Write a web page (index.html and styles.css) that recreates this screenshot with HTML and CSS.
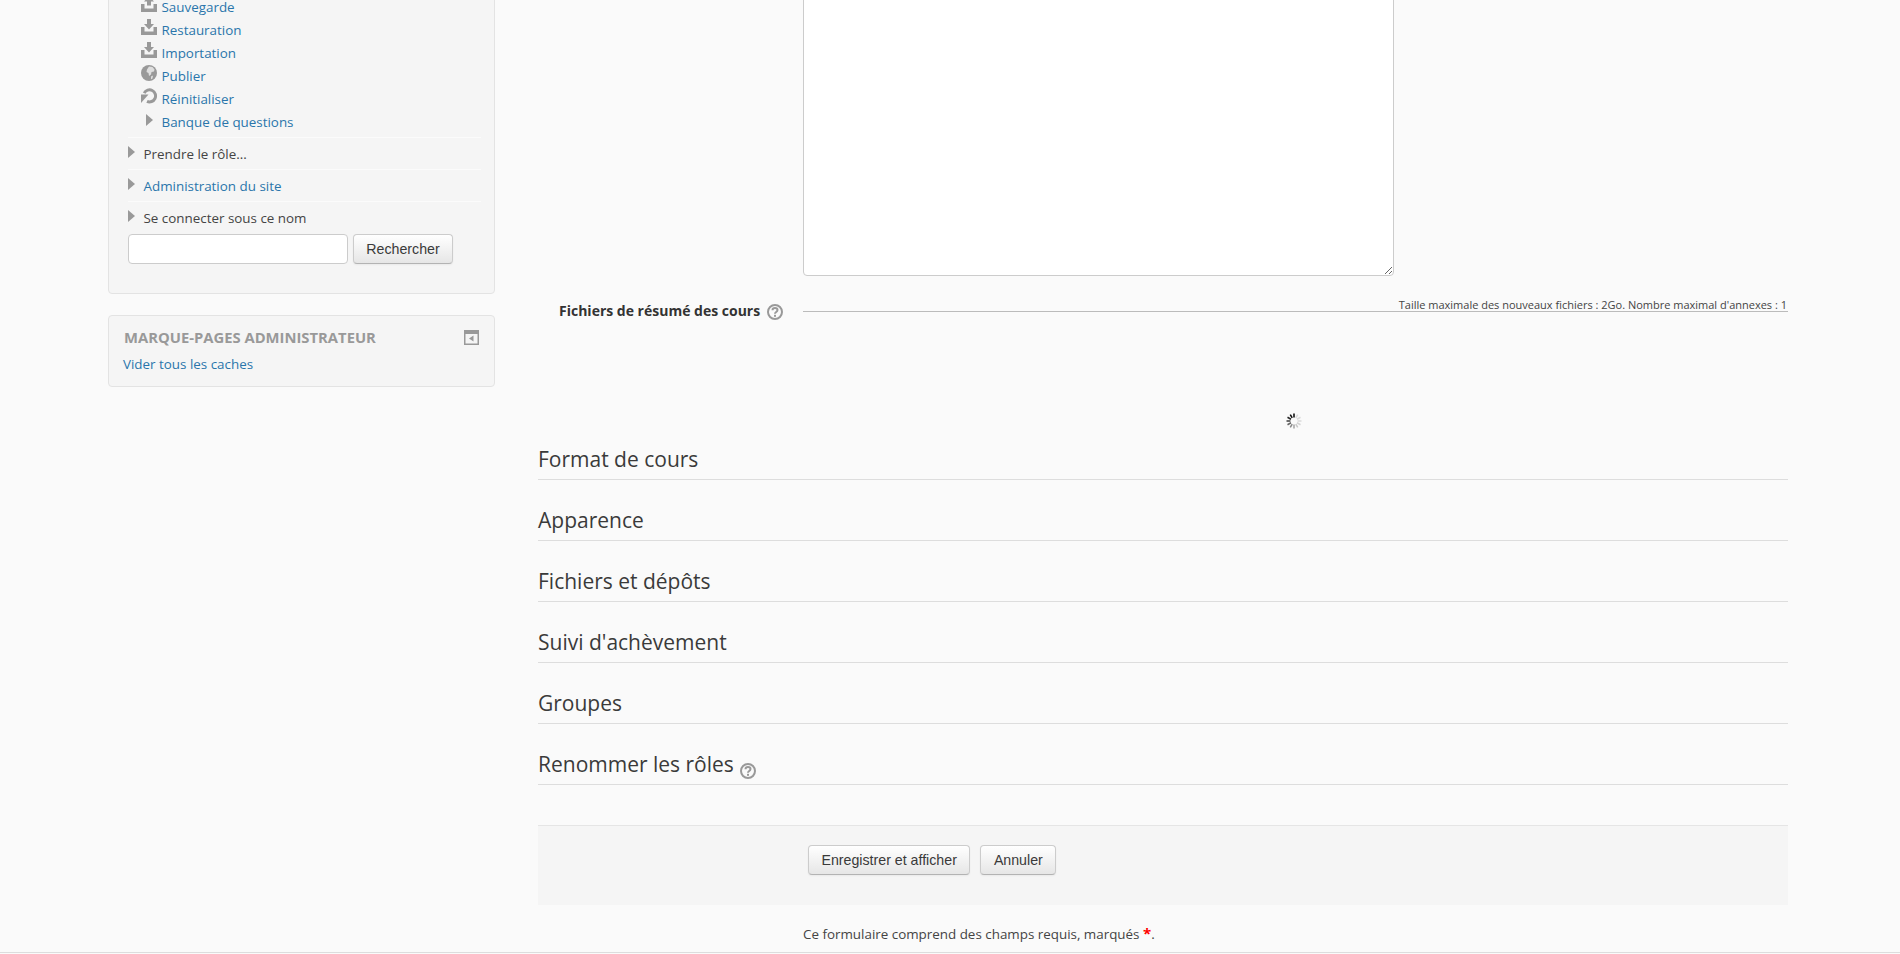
FILE: index.html
```html
<!DOCTYPE html>
<html lang="fr">
<head>
  <meta charset="UTF-8" />
  <meta name="viewport" content="width=device-width, initial-scale=1.0" />
  <title>Modifier les paramètres du cours</title>
  <link rel="stylesheet" href="styles.css">
</head>
<body>
  <svg class="icon-defs" width="0" height="0">
    <defs>
      <symbol id="i-help" viewBox="0 0 16 16">
        <circle cx="8" cy="8" r="7" fill="none" stroke="#999" stroke-width="2"/>
        <path d="M5.500 6.300c0-1.500 1-2.300 2.500-2.300s2.500.8 2.500 2.100c0 1.900-2.500 1.900-2.500 3.600" fill="none" stroke="#999" stroke-width="2"/>
        <rect x="7" y="10.800" width="2" height="2" fill="#999"/>
      </symbol>
      <symbol id="i-arrow" viewBox="0 0 7 12">
        <path d="M0 0l7 6-7 6z" fill="#999"/>
      </symbol>
    </defs>
  </svg>

  <div class="page">
    <aside class="sidebar">
      <div class="block block-settings">
        <ul class="sub-list">
          <li>
            <svg class="icon" viewBox="0 0 16 16"><path d="M8 0l5 5.500h-3v4H6v-4H3z" fill="#999"/><path d="M0 8h3.500v4.500h9V8H16v8H0z" fill="#999"/></svg>
            <a href="#">Sauvegarde</a>
          </li>
          <li>
            <svg class="icon" viewBox="0 0 16 16"><path d="M6 0h4v5h3l-5 5.500L3 5h3z" fill="#999"/><path d="M0 8h3.500v4.500h9V8H16v8H0z" fill="#999"/></svg>
            <a href="#">Restauration</a>
          </li>
          <li>
            <svg class="icon" viewBox="0 0 16 16"><path d="M6 0h4v5h3l-5 5.500L3 5h3z" fill="#999"/><path d="M0 8h3.500v4.500h9V8H16v8H0z" fill="#999"/></svg>
            <a href="#">Importation</a>
          </li>
          <li>
            <svg class="icon" viewBox="0 0 16 16"><circle cx="8" cy="8" r="8" fill="#999"/><path d="M8 1.500l3.500.5 2 2.500-.5 2-2.500.5-.5 2.500-2 1.500-.5-3L5.500 7 6 4.500z" fill="#f5f5f5" opacity=".75"/><path d="M10 11.500l2-1-.5 3-1.500.8z" fill="#f5f5f5" opacity=".75"/></svg>
            <a href="#">Publier</a>
          </li>
          <li>
            <svg class="icon" viewBox="0 0 16 16"><path d="M3.200 5.200A6 6 0 1 1 6 13.300" fill="none" stroke="#999" stroke-width="3"/><path d="M0 6.500h7.500L0 15z" fill="#999"/></svg>
            <a href="#">Réinitialiser</a>
          </li>
          <li class="sub-branch">
            <svg class="arrow"><use href="#i-arrow"/></svg>
            <a href="#">Banque de questions</a>
          </li>
        </ul>
        <div class="branch">
          <svg class="arrow"><use href="#i-arrow"/></svg>
          <span>Prendre le rôle...</span>
        </div>
        <div class="branch">
          <svg class="arrow"><use href="#i-arrow"/></svg>
          <a href="#">Administration du site</a>
        </div>
        <div class="branch">
          <svg class="arrow"><use href="#i-arrow"/></svg>
          <span>Se connecter sous ce nom</span>
        </div>
        <form class="search-form">
          <input type="text" class="search-input">
          <button type="button" class="btn btn-search">Rechercher</button>
        </form>
      </div>

      <div class="block block-bookmarks">
        <div class="block-head">
          <h2>Marque-pages administrateur</h2>
          <svg class="icon-dock" viewBox="0 0 15 15"><path d="M0 0h15v15H0zM1.500 4v9.500h12V4z" fill="#999" fill-rule="evenodd"/><path d="M9.500 5.500v6L5 8.500z" fill="#999"/></svg>
        </div>
        <a href="#">Vider tous les caches</a>
      </div>
    </aside>

    <main class="content">
      <div class="summary-row">
        <textarea class="summary-text"></textarea>
      </div>

      <div class="files-row">
        <div class="files-label">
          <strong>Fichiers de résumé des cours</strong>
          <svg class="help"><use href="#i-help"/></svg>
        </div>
        <div class="files-info">Taille maximale des nouveaux fichiers : 2Go. Nombre maximal d'annexes : 1</div>
        <svg class="spinner" viewBox="-8 -8 16 16">
          <g stroke-width="1.500" stroke="#000">
            <line x1="0" y1="-3.500" x2="0" y2="-7.500" opacity="1"/>
            <line x1="0" y1="-3.500" x2="0" y2="-7.500" opacity=".12" transform="rotate(30)"/>
            <line x1="0" y1="-3.500" x2="0" y2="-7.500" opacity=".12" transform="rotate(60)"/>
            <line x1="0" y1="-3.500" x2="0" y2="-7.500" opacity=".12" transform="rotate(90)"/>
            <line x1="0" y1="-3.500" x2="0" y2="-7.500" opacity=".15" transform="rotate(120)"/>
            <line x1="0" y1="-3.500" x2="0" y2="-7.500" opacity=".2" transform="rotate(150)"/>
            <line x1="0" y1="-3.500" x2="0" y2="-7.500" opacity=".35" transform="rotate(180)"/>
            <line x1="0" y1="-3.500" x2="0" y2="-7.500" opacity=".45" transform="rotate(210)"/>
            <line x1="0" y1="-3.500" x2="0" y2="-7.500" opacity=".6" transform="rotate(240)"/>
            <line x1="0" y1="-3.500" x2="0" y2="-7.500" opacity=".75" transform="rotate(270)"/>
            <line x1="0" y1="-3.500" x2="0" y2="-7.500" opacity=".85" transform="rotate(300)"/>
            <line x1="0" y1="-3.500" x2="0" y2="-7.500" opacity=".95" transform="rotate(330)"/>
          </g>
        </svg>
      </div>

      <h3 class="section-head">Format de cours</h3>
      <h3 class="section-head">Apparence</h3>
      <h3 class="section-head">Fichiers et dépôts</h3>
      <h3 class="section-head">Suivi d'achèvement</h3>
      <h3 class="section-head">Groupes</h3>
      <h3 class="section-head">Renommer les rôles <svg class="help help-head"><use href="#i-help"/></svg></h3>

      <div class="form-actions">
        <button type="button" class="btn">Enregistrer et afficher</button>
        <button type="button" class="btn">Annuler</button>
      </div>

      <p class="required-note">Ce formulaire comprend des champs requis, marqués <span class="req">*</span>.</p>
    </main>
  </div>
</body>
</html>
```

FILE: styles.css
```css
* {
  margin: 0;
  padding: 0;
  box-sizing: border-box;
}

html,
body {
  height: 954px;
  overflow: hidden;
}

body {
  font-family: "Open Sans", Arial, sans-serif;
  font-size: 13.4px;
  color: #444;
  background-color: #fafafa;
}

a {
  color: #2a75ab;
  text-decoration: none;
}

.icon-defs {
  position: absolute;
}

.page {
  display: flex;
  height: 953px;
  padding-left: 108px;
  gap: 43px;
  border-bottom: 1px solid #ddd;
  overflow: hidden;
}

/* Sidebar */
.sidebar {
  width: 387px;
  flex: none;
}

.block {
  background-color: #f5f5f5;
  border: 1px solid #e3e3e3;
  border-radius: 4px;
}

.block-settings {
  margin-top: -20px;
  height: 314px;
  padding: 14px 13px 0 19px;
}

.sub-list {
  list-style: none;
}

.sub-list li {
  display: flex;
  align-items: center;
  height: 23px;
  padding-left: 13px;
}

.sub-list a {
  margin-left: 4.500px;
}

.icon {
  width: 16px;
  height: 16px;
  margin-top: -6px;
}

.arrow {
  width: 7px;
  height: 12px;
  margin-top: -4px;
  flex: none;
}

.sub-list .sub-branch {
  padding-left: 18px;
}

.sub-list .sub-branch a {
  margin-left: 8.500px;
}

.branch {
  display: flex;
  align-items: center;
  height: 32px;
  padding-top: 1px;
  border-top: 1px solid #fbfbfb;
}

.sub-list + .branch {
  margin-top: 4px;
}

.branch a,
.branch span {
  margin-left: 8.500px;
}

.search-form {
  display: flex;
  gap: 5px;
  margin-top: 1px;
}

.search-input {
  width: 220px;
  height: 30px;
  background: #fff;
  border: 1px solid #ccc;
  border-radius: 4px;
}

.btn {
  height: 30px;
  padding: 0 12.500px;
  font-family: "Liberation Sans", Arial, sans-serif;
  font-size: 14.2px;
  color: #3a3a3a;
  background: linear-gradient(#fff, #e6e6e6);
  border: 1px solid #ccc;
  border-bottom-color: #b3b3b3;
  border-radius: 4px;
  box-shadow: 0 1px 2px rgba(0, 0, 0, 0.05);
  cursor: pointer;
}

.btn-search {
  width: 100px;
  padding: 0;
}

.block-bookmarks {
  margin-top: 21px;
  height: 72px;
  padding: 10px 14px 0 14px;
}

.block-head {
  display: flex;
  justify-content: space-between;
  align-items: center;
  height: 22px;
  padding-left: 1px;
  margin-bottom: 7px;
}

.block-head h2 {
  font-size: 14.800px;
  font-weight: bold;
  text-transform: uppercase;
  color: #999;
}

.icon-dock {
  width: 15px;
  height: 15px;
  margin-right: 1px;
}

/* Main form */
.content {
  width: 1250px;
  flex: none;
}

.summary-row {
  padding-left: 265px;
  margin-top: -20px;
}

.summary-text {
  display: block;
  width: 591px;
  height: 296px;
  background: #fff;
  border: 1px solid #ccc;
  border-radius: 4px;
}

.files-row {
  position: relative;
  display: flex;
  height: 143px;
  padding-top: 26px;
}

.files-label {
  display: flex;
  align-items: flex-start;
  width: 265px;
  flex: none;
  padding-left: 21px;
  line-height: 18px;
}

.files-label strong {
  font-size: 14px;
  color: #333;
}

.help {
  width: 16px;
  height: 16px;
  margin-left: 7px;
  margin-top: 2px;
}

.files-info {
  flex: 1;
  height: 13px;
  font-size: 11px;
  line-height: 12px;
  text-align: right;
  padding-right: 1px;
  margin-top: -3px;
  border-bottom: 1px solid #bbb;
  color: #444;
}

.spinner {
  position: absolute;
  left: 748px;
  top: 137px;
  width: 16px;
  height: 16px;
}

.section-head {
  height: 61px;
  padding-top: 28px;
  font-size: 21px;
  font-weight: normal;
  line-height: 24px;
  color: #3a3a3a;
  border-bottom: 1px solid #ddd;
}

.help-head {
  margin-left: 1px;
  margin-top: 0;
  vertical-align: -7px;
}

.form-actions {
  display: flex;
  gap: 10px;
  height: 80px;
  margin-top: 40px;
  padding: 19px 0 0 270px;
  background-color: #f5f5f5;
  border-top: 1px solid #e5e5e5;
}

.required-note {
  margin-top: 19px;
  padding-left: 265px;
  line-height: 18px;
}

.req {
  color: #f00;
  font-weight: bold;
  font-size: 15px;
}
```
